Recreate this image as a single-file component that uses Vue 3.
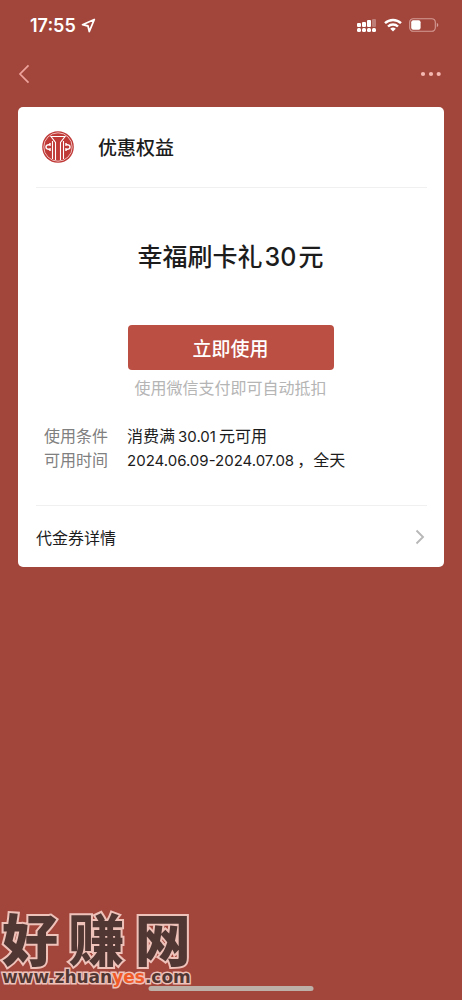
<script setup>
const conditions = [
  { label: '使用条件', before: '消费满', number: '30.01', after: '元可用' },
  { label: '可用时间', before: '', number: '2024.06.09-2024.07.08', after: '，全天' },
]
</script>

<template>
  <div class="page">
    <header class="status">
      <div class="clock">
        <span>17:55</span>
        <svg width="15" height="15" viewBox="0 0 15 15" fill="none" stroke="#fff" stroke-width="1.8" stroke-linejoin="round">
          <path d="M13.3 1.5 1.5 6.7 7 8 8.3 13.5Z" />
        </svg>
      </div>
      <div class="signals">
        <svg width="20" height="14" viewBox="0 0 20 14" fill="#fff">
          <rect x="0" y="5" width="4" height="4" rx="1" />
          <rect x="5" y="4" width="4" height="5" rx="1" />
          <rect x="10" y="2" width="4" height="7" rx="1" />
          <rect x="15" y="1" width="4" height="8" rx="1" opacity=".3" />
          <rect x="0" y="10" width="4" height="4" rx="1.5" />
          <rect x="5" y="10" width="4" height="4" rx="1.5" />
          <rect x="10" y="10" width="4" height="4" rx="1.5" />
          <rect x="15" y="10" width="4" height="4" rx="1.5" />
        </svg>
        <svg width="18" height="14" viewBox="0 0 18 14" fill="none" stroke="#fff" stroke-width="2.4">
          <path d="M1 5.2a11.5 11.5 0 0 1 16 0M4 8.5a7.2 7.2 0 0 1 10 0" />
          <path d="M6.2 10.8a4 4 0 0 1 5.6 0L9 13.6Z" fill="#fff" stroke="none" />
        </svg>
        <svg width="30" height="14" viewBox="0 0 30 14">
          <rect x=".7" y=".7" width="25.6" height="12.6" rx="3.6" fill="none" stroke="#d49d97" stroke-width="1.1" />
          <rect x="2.2" y="2.2" width="9.4" height="9.6" rx="2" fill="#fff" />
          <path d="M27.8 4.8c2 .8 2 3.6 0 4.4Z" fill="#d49d97" />
        </svg>
      </div>
    </header>

    <nav class="nav">
      <button type="button" aria-label="返回">
        <svg width="12" height="20" viewBox="0 0 12 20" fill="none" stroke="#eea49c" stroke-width="1.7">
          <path d="M10.5 1.3 2 10l8.5 8.7" />
        </svg>
      </button>
      <button type="button" aria-label="更多">
        <svg width="22" height="6" viewBox="0 0 22 6" fill="#f6b9b2">
          <circle cx="3" cy="3" r="2.1" /><circle cx="11" cy="3" r="2.1" /><circle cx="18.7" cy="3" r="2.1" />
        </svg>
      </button>
    </nav>

    <main class="card">
      <div class="brand">
        <svg width="32" height="32" viewBox="0 0 32 32">
          <circle cx="16" cy="16" r="15.8" fill="#bf3937" />
          <circle cx="16" cy="16" r="14.2" fill="none" stroke="#f3cbc7" stroke-width=".9" />
          <g fill="none" stroke="#fff">
            <path d="M10.5 28V10M13.5 29V11.5L9 5.500h14L18.5 11.5V29M21.5 28V10" stroke-width="1.1" />
            <path d="M8 12v2C5.5 13.4 4 14.5 4 16s1.5 2.600 4 2v2M24 12v2c2.5-.6 4 .5 4 2s-1.5 2.600-4 2v2" stroke-width="1.5" />
          </g>
        </svg>
        <h1>优惠权益</h1>
      </div>

      <section class="offer">
        <h2>幸福刷卡礼<span class="num">30</span>元</h2>
        <button type="button" class="use">立即使用</button>
        <p class="hint">使用微信支付即可自动抵扣</p>
        <dl>
          <div v-for="c in conditions" :key="c.label">
            <dt>{{ c.label }}</dt>
            <dd>{{ c.before }}<span :class="{ inner: c.before }">{{ c.number }}</span>{{ c.after }}</dd>
          </div>
        </dl>
      </section>

      <a class="details" href="#details">
        <span>代金券详情</span>
        <svg width="10" height="16" viewBox="0 0 10 16" fill="none" stroke="#b8b8b8" stroke-width="1.9">
          <path d="m1.5 1.5 6.5 6.5-6.5 6.5" />
        </svg>
      </a>
    </main>

    <div class="home"></div>
    <div class="mark">
      <div class="mark-name"><span>好</span><span>赚</span><span>网</span></div>
      <div class="mark-url">www.zhuan<span>yes</span>.com</div>
    </div>
  </div>
</template>

<style>
body {
  background: #a2453b;
}
</style>

<style scoped>
.page {
  position: relative;
  box-sizing: border-box;
  min-height: 100vh;
  padding: 0 18px;
  overflow: hidden;
  background: #a2453b;
  color: #1c1c1c;
  font-family: Inter, "Noto Sans CJK SC", sans-serif;
}
h1, h2, p, dl, dd {
  margin: 0;
}
button {
  padding: 0;
  border: 0;
  background: none;
  font-family: inherit;
  cursor: pointer;
}
svg {
  display: block;
}
.status {
  display: flex;
  align-items: center;
  justify-content: space-between;
  height: 50px;
  padding: 0 5px 0 12px;
}
.clock {
  display: flex;
  align-items: center;
  gap: 5px;
  color: #fff;
  font-size: 18px;
  font-weight: 600;
}
.signals {
  display: flex;
  gap: 7px;
}
.nav {
  display: flex;
  align-items: center;
  justify-content: space-between;
  height: 48px;
  margin-bottom: 9px;
  padding: 0 2px 0 0;
}
.card {
  padding: 0 17px 0 18px;
  border-radius: 5px;
  background: #fff;
}
.brand {
  display: flex;
  align-items: center;
  gap: 24px;
  height: 80px;
  padding-left: 6px;
  border-bottom: 1px solid #f0f0f0;
}
h1 {
  padding-top: 3px;
  font-size: 19px;
  font-weight: 500;
  line-height: 28px;
}
.offer {
  padding: 51px 10px 33px 8px;
  border-bottom: 1px solid #f0f0f0;
  text-align: center;
}
h2 {
  font-size: 25px;
  font-weight: 500;
  line-height: 36px;
}
.num {
  margin: 0 2px;
}
.use {
  display: block;
  width: 206px;
  height: 45px;
  margin: 50px auto 6px;
  border-radius: 4px;
  background: #bc4f43;
  color: #fff;
  font-size: 19px;
  font-weight: 500;
}
.hint {
  color: #b5b5b5;
  font-size: 16px;
  line-height: 24px;
}
dl {
  margin-top: 24px;
  font-size: 16px;
  line-height: 24px;
  text-align: left;
}
dl div {
  display: flex;
  gap: 19px;
}
dt {
  color: #808080;
}
dd span {
  margin-right: 3px;
  font-size: 15px;
  line-height: 16px;
}
dd .inner {
  margin-left: 3px;
}
.details {
  display: flex;
  align-items: center;
  justify-content: space-between;
  height: 61px;
  padding-right: 2px;
  color: #1c1c1c;
  font-size: 16px;
  text-decoration: none;
}
.home {
  position: absolute;
  bottom: 9px;
  left: 50%;
  width: 165px;
  height: 5px;
  border-radius: 3px;
  background: #bcb0a8;
  transform: translateX(-50%);
}
.mark {
  position: absolute;
  bottom: 15px;
  left: 2px;
  color: #513733;
  white-space: nowrap;
  paint-order: stroke fill;
}
.mark-name {
  display: flex;
  justify-content: space-between;
  margin-bottom: 5px;
  font-family: "Noto Sans CJK SC", sans-serif;
  font-size: 56px;
  font-weight: 900;
  line-height: 54px;
  -webkit-text-stroke: 4px #eec1b9;
}
.mark-url {
  font-family: "DejaVu Sans", sans-serif;
  font-size: 17px;
  font-weight: 700;
  line-height: 16px;
  -webkit-text-stroke: 3px #eec1b9;
}
.mark-url span {
  color: #f05a28;
}
</style>
